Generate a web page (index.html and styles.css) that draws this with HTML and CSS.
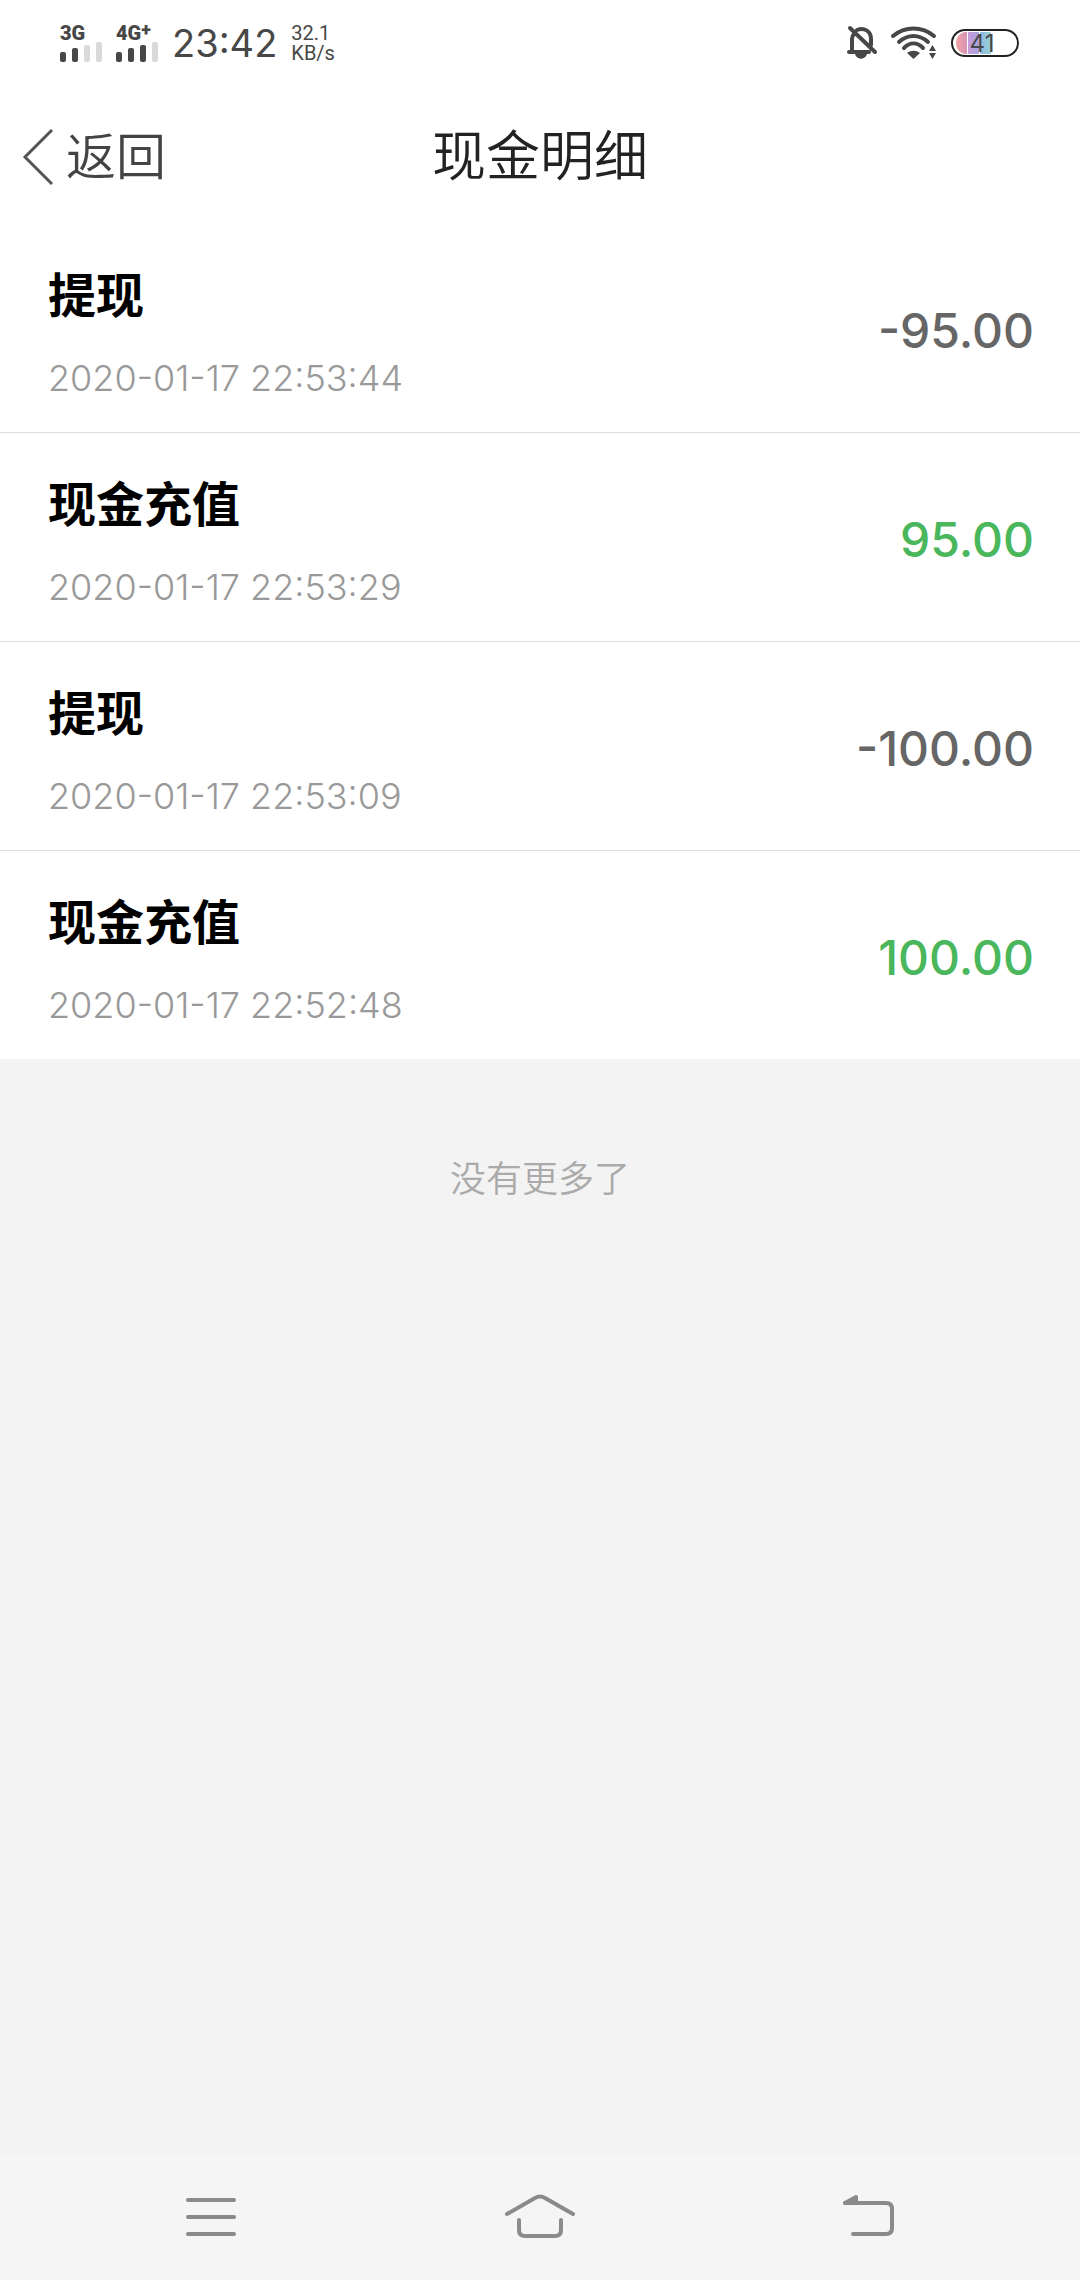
FILE: index.html
```html
<!DOCTYPE html>
<html lang="zh-CN">
<head>
    <meta charset="UTF-8">
    <meta name="viewport" content="width=device-width, initial-scale=1.0">
    <title>现金明细</title>
    <link rel="stylesheet" href="styles.css">
</head>
<body>

    <!-- Status bar -->
    <div class="status-bar">
        <div class="status-left">
            <div class="signal">
                <span class="signal-type">3G</span>
                <svg width="42" height="20" viewBox="0 0 42 20">
                    <rect class="bar-on" x="0" y="10" width="6" height="10" rx="2"/>
                    <rect class="bar-on" x="12" y="6" width="6" height="14" rx="2"/>
                    <rect class="bar-off" x="24" y="3" width="6" height="17" rx="2"/>
                    <rect class="bar-off" x="36" y="0" width="6" height="20" rx="2"/>
                </svg>
            </div>
            <div class="signal">
                <span class="signal-type">4G<sup>+</sup></span>
                <svg width="42" height="20" viewBox="0 0 42 20">
                    <rect class="bar-on" x="0" y="10" width="6" height="10" rx="2"/>
                    <rect class="bar-on" x="12" y="6" width="6" height="14" rx="2"/>
                    <rect class="bar-on" x="24" y="3" width="6" height="17" rx="2"/>
                    <rect class="bar-off" x="36" y="0" width="6" height="20" rx="2"/>
                </svg>
            </div>
            <span class="clock">23:42</span>
            <div class="speed">
                <span>32.1</span>
                <span>KB/s</span>
            </div>
        </div>
        <div class="status-right">
            <!-- Muted bell -->
            <svg width="32" height="36" viewBox="0 0 32 36" fill="none" stroke="#474747" stroke-width="4" stroke-linecap="round">
                <path d="M6 27V14C6 12 6 11 8 9M11 5C18 2 25 6 25 14V20M3 27H23M4 3L29 27"/>
                <path d="M9 28H21C20 35 10 35 9 28Z" fill="#474747" stroke="none"/>
                <path d="M11 30C13 33 17 33 19 30" stroke-width="3"/>
            </svg>
            <!-- Wifi -->
            <svg width="48" height="36" viewBox="0 0 48 36" fill="none" stroke="#474747" stroke-width="4" stroke-linecap="round">
                <path d="M3 11C15 1 32 1 44 11M9 17C18 9 29 9 38 17M14 23C20 17 27 17 33 23"/>
                <path d="M17 28C21 25 26 25 30 28L23.500 34Z" fill="#474747" stroke="none"/>
                <path d="M39 26L42.500 20L46 26ZM39 28L42.500 34L46 28Z" fill="#474747" stroke="none"/>
            </svg>
            <!-- Battery -->
            <svg class="battery" width="70" height="30" viewBox="0 0 70 30">
                <defs>
                    <linearGradient id="pink"><stop offset="0" stop-color="#f3a3a3"/><stop offset="1" stop-color="#d795b5"/></linearGradient>
                    <linearGradient id="purple"><stop offset="0" stop-color="#c99bd8"/><stop offset="1" stop-color="#a3a5e0"/></linearGradient>
                    <linearGradient id="blue"><stop offset="0" stop-color="#8fb9dc"/><stop offset="1" stop-color="#9ad0dc"/></linearGradient>
                </defs>
                <path d="M15 4H17V26H15C3 24 3 6 15 4Z" fill="url(#pink)"/>
                <rect x="18" y="4" width="11" height="22" fill="url(#purple)"/>
                <rect x="30" y="4" width="11" height="22" rx="1" fill="url(#blue)"/>
                <rect x="2" y="2" width="66" height="26" rx="13" fill="none" stroke="#222" stroke-width="2"/>
                <text x="32" y="24" text-anchor="middle">41</text>
            </svg>
        </div>
    </div>

    <!-- Page header -->
    <header class="header">
        <button class="back" type="button">
            <svg width="32" height="56" viewBox="0 0 32 56" fill="none" stroke="#555" stroke-width="3">
                <path d="M30 1L3 28L30 55"/>
            </svg>
            返回
        </button>
        <h1>现金明细</h1>
    </header>

    <!-- Transaction list -->
    <main class="content">
        <ul class="records">
            <li class="record">
                <div>
                    <h2>提现</h2>
                    <time>2020-01-17 22:53:44</time>
                </div>
                <span class="amount">-95.00</span>
            </li>
            <li class="record">
                <div>
                    <h2>现金充值</h2>
                    <time>2020-01-17 22:53:29</time>
                </div>
                <span class="amount income">95.00</span>
            </li>
            <li class="record">
                <div>
                    <h2>提现</h2>
                    <time>2020-01-17 22:53:09</time>
                </div>
                <span class="amount">-100.00</span>
            </li>
            <li class="record">
                <div>
                    <h2>现金充值</h2>
                    <time>2020-01-17 22:52:48</time>
                </div>
                <span class="amount income">100.00</span>
            </li>
        </ul>
        <p class="no-more">没有更多了</p>
    </main>

    <!-- System navigation -->
    <nav class="nav-bar">
        <button type="button" aria-label="Menu">
            <svg width="70" height="46" viewBox="0 0 70 46">
                <path d="M12 6H58M12 23H58M12 40H58"/>
            </svg>
        </button>
        <button type="button" aria-label="Home">
            <svg width="70" height="46" viewBox="0 0 70 46">
                <path d="M2 20L30 4Q35 1 40 4L68 20M14 26V36Q14 42 20 42H50Q56 42 56 36V26"/>
            </svg>
        </button>
        <button type="button" aria-label="Back">
            <svg width="70" height="46" viewBox="0 0 70 46">
                <path d="M11 9H52Q58 9 58 15V34Q58 40 52 40H19"/>
                <path d="M11 9L22 3V9Z" fill="#8a8a8a"/>
            </svg>
        </button>
    </nav>

</body>
</html>
```
FILE: styles.css
```css
* {
    box-sizing: border-box;
}

body {
    display: flex;
    flex-direction: column;
    min-height: 100vh;
    margin: 0;
    font-family: Inter, 'Noto Sans CJK SC', sans-serif;
    background-color: #f3f3f3;
}

h1, h2, p, ul {
    margin: 0;
    padding: 0;
}

button {
    border: none;
    padding: 0;
    background: none;
    font-family: inherit;
    cursor: pointer;
}

svg {
    display: block;
}

/* Status bar */
.status-bar {
    display: flex;
    justify-content: space-between;
    align-items: center;
    height: 86px;
    padding: 0 60px;
    background-color: #fff;
    color: #474747;
}

.status-left,
.status-right {
    display: flex;
    align-items: center;
}

.signal {
    width: 42px;
    margin-right: 14px;
}

.signal-type {
    display: block;
    font-family: Roboto, sans-serif;
    font-size: 20px;
    line-height: 18px;
    font-weight: 900;
    white-space: nowrap;
}

.signal-type sup {
    font-size: 18px;
    line-height: 0;
    vertical-align: 4px;
}

.bar-on {
    fill: #474747;
}

.bar-off {
    fill: #dadada;
}

.clock {
    font-size: 38px;
    line-height: 48px;
}

.speed {
    display: flex;
    flex-direction: column;
    margin-left: 14px;
    font-family: Roboto, sans-serif;
    font-size: 20px;
    line-height: 20px;
}

.status-right {
    gap: 12px;
}

.battery text {
    font-size: 24px;
    fill: #474747;
}

/* Header with centered title */
.header {
    display: grid;
    grid-template-columns: 1fr auto 1fr;
    align-items: center;
    height: 138px;
    padding: 4px 22px 0;
    background-color: #fff;
}

.header h1 {
    font-size: 54px;
    line-height: 72px;
    font-weight: 350;
    color: #222;
}

.back {
    display: flex;
    align-items: center;
    gap: 12px;
    font-size: 50px;
    line-height: 72px;
    font-weight: 350;
    color: #444;
}

/* Records */
.content {
    flex: 1;
}

.records {
    list-style: none;
    background-color: #fff;
}

.record {
    display: flex;
    justify-content: space-between;
    align-items: center;
    padding: 36px 46px 30px 48px;
    border-bottom: 1px solid #ddd;
}

.record:last-child {
    border-bottom: none;
}

.record h2 {
    margin-bottom: 22px;
    font-size: 48px;
    line-height: 72px;
    font-weight: 700;
    color: #000;
}

.record time {
    display: block;
    font-size: 36px;
    line-height: 48px;
    font-weight: 300;
    color: #999;
}

.amount {
    font-size: 48px;
    line-height: 60px;
    font-weight: 500;
    color: #666;
}

.income {
    color: #4ab75c;
}

.no-more {
    padding: 94px 0;
    font-size: 36px;
    line-height: 52px;
    font-weight: 350;
    text-align: center;
    color: #aaa;
}

/* Bottom navigation */
.nav-bar {
    display: flex;
    height: 126px;
    padding: 0 46px;
    background-color: #f5f5f5;
}

.nav-bar button {
    display: flex;
    flex: 1;
    justify-content: center;
    align-items: center;
}

.nav-bar svg {
    fill: none;
    stroke: #8a8a8a;
    stroke-width: 4;
    stroke-linecap: round;
    stroke-linejoin: round;
}
```
